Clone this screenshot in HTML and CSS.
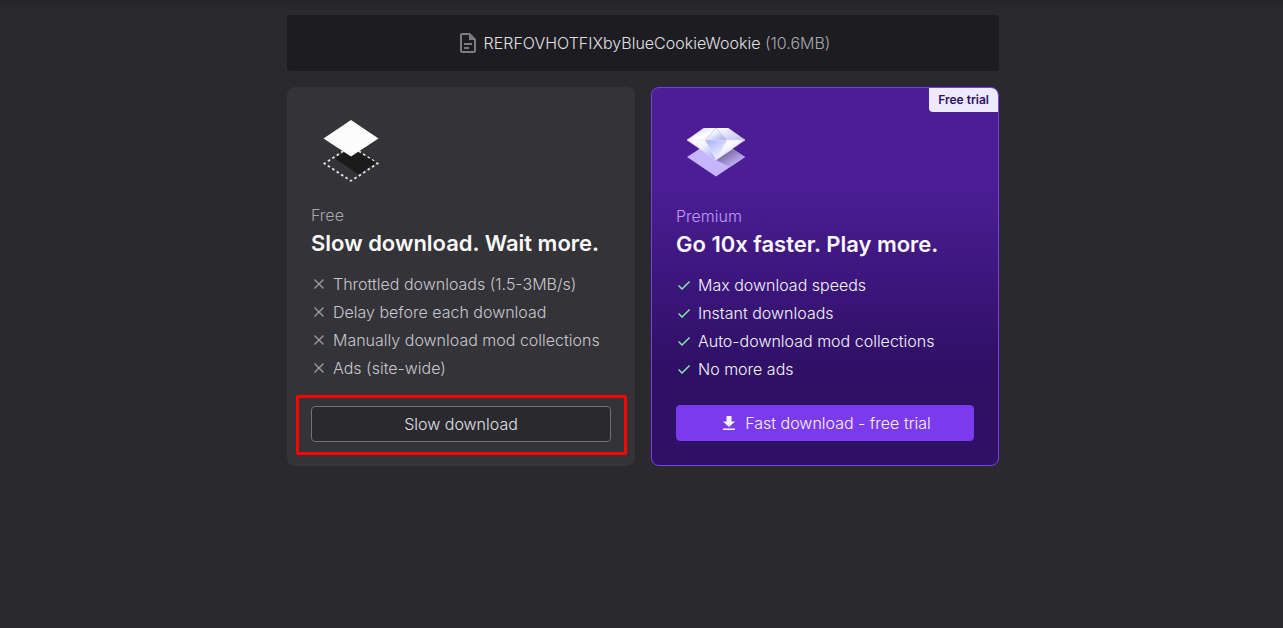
FILE: index.html
```html
<!DOCTYPE html>
<html lang="en">
<head>
<meta charset="utf-8">
<meta name="viewport" content="width=device-width, initial-scale=1">
<title>Download</title>
<link rel="stylesheet" href="styles.css">
</head>
<body>
<svg width="0" height="0" class="symbols" aria-hidden="true">
  <symbol id="cross" viewBox="0 0 16 16"><path d="M3.5 3.5l9 9M12.5 3.5l-9 9" fill="none" stroke="currentColor" stroke-width="1.2"/></symbol>
  <symbol id="check" viewBox="0 0 16 16"><path d="M2.6 8.6L6 12l7.6-7.6" fill="none" stroke="currentColor" stroke-width="1.4"/></symbol>
</svg>
<main class="page">
  <header class="file">
    <svg class="file-icon" viewBox="0 0 24 24" aria-hidden="true"><path fill="currentColor" d="M6 2a2 2 0 0 0-2 2v16a2 2 0 0 0 2 2h12a2 2 0 0 0 2-2V8l-6-6H6zm0 2h7v5h5v11H6V4zm2 8v2h8v-2H8zm0 4v2h5v-2H8z"/></svg>
    <p class="file-name">RERFOVHOTFIXbyBlueCookieWookie <span class="file-size">(10.6MB)</span></p>
  </header>
  <div class="plans">
    <section class="card">
      <svg class="art" viewBox="0 0 80 80" aria-hidden="true">
        <path d="M40 70L13.500 52.500 40 35M40 70L66.500 52.500 40 35" fill="none" stroke="#e4e4e4" stroke-width="1.800" stroke-dasharray="2.600 2.700" stroke-dashoffset="1.300"/>
        <path d="M24 47.500L40 37l25 14.500L47.500 63.500z" fill="#1b1b1c"/>
        <path d="M40 9L67.500 27.500 40 45.500 12.500 27.500z" fill="#fcfcfc"/>
      </svg>
      <p class="plan">Free</p>
      <h2 class="title">Slow download. Wait more.</h2>
      <ul class="features">
        <li><svg class="mark"><use href="#cross"/></svg>Throttled downloads (1.5-3MB/s)</li>
        <li><svg class="mark"><use href="#cross"/></svg>Delay before each download</li>
        <li><svg class="mark"><use href="#cross"/></svg>Manually download mod collections</li>
        <li><svg class="mark"><use href="#cross"/></svg>Ads (site-wide)</li>
      </ul>
      <div class="action highlighted"><button type="button" class="button">Slow download</button></div>
    </section>
    <section class="card premium">
      <span class="badge">Free trial</span>
      <svg class="art" viewBox="0 0 80 80" aria-hidden="true">
        <defs>
          <linearGradient id="facetA" x1="0" y1="0" x2="1" y2="1"><stop offset="0" stop-color="#c3cbfa"/><stop offset=".6" stop-color="#fff"/><stop offset="1" stop-color="#eceeff"/></linearGradient>
          <linearGradient id="facetR" x1="0" y1="0" x2="1" y2="1"><stop offset="0" stop-color="#fff"/><stop offset="1" stop-color="#b5bdf5"/></linearGradient>
          <linearGradient id="facetB" x1="0" y1="0" x2="1" y2="1"><stop offset="0" stop-color="#fff"/><stop offset=".4" stop-color="#f4f5ff"/><stop offset="1" stop-color="#97a5f8"/></linearGradient>
          <linearGradient id="facetC" x1="0" y1="0" x2=".7" y2="1"><stop offset="0" stop-color="#a3b0fa"/><stop offset="1" stop-color="#f5f6ff"/></linearGradient>
          <linearGradient id="shade" gradientUnits="userSpaceOnUse" x1="48" y1="40" x2="58" y2="55"><stop offset="0" stop-color="#75659b"/><stop offset="1" stop-color="#c4b5fd"/></linearGradient>
        </defs>
        <path d="M40 26L69 45 40 64.500 11 45z" fill="#c4b5fd"/>
        <path d="M40 48L57 37l12 8-15 10z" fill="url(#shade)"/>
        <path d="M28 16H40L29.500 28H11z" fill="url(#facetA)"/>
        <path d="M40 16H52L69 28H50.500z" fill="url(#facetR)"/>
        <path d="M40 16L50.500 28h-21z" fill="url(#facetB)"/>
        <path d="M11 28h18.500L40 48z" fill="url(#facetB)"/>
        <path d="M29.500 28h21L40 48z" fill="url(#facetC)"/>
        <path d="M50.500 28H69L40 48z" fill="url(#facetB)"/>
        <path d="M11 28H69M40 16L29.500 28 40 48 50.500 28zM28 16L11 28l29 20 29-20-17-12" fill="none" stroke="#f3dcdc" stroke-width=".5"/>
      </svg>
      <p class="plan">Premium</p>
      <h2 class="title">Go 10x faster. Play more.</h2>
      <ul class="features">
        <li><svg class="mark"><use href="#check"/></svg>Max download speeds</li>
        <li><svg class="mark"><use href="#check"/></svg>Instant downloads</li>
        <li><svg class="mark"><use href="#check"/></svg>Auto-download mod collections</li>
        <li><svg class="mark"><use href="#check"/></svg>No more ads</li>
      </ul>
      <div class="action"><button type="button" class="button primary"><svg class="button-icon" viewBox="0 0 20 20" aria-hidden="true"><path fill="currentColor" d="M4 15.500h12V17H4zM16 8.500h-3.500V3h-5v5.500H4l6 5.500z"/></svg>Fast download - free trial</button></div>
    </section>
  </div>
</main>
</body>
</html>
```
FILE: styles.css
```css
* { box-sizing: border-box; }

body {
  margin: 0;
  min-height: 100vh;
  background: linear-gradient(#242428, #29292e 12px);
  color: #f4f4f5;
  font: 300 16px/24px Inter, "Liberation Sans", sans-serif;
}

p, h2, ul { margin: 0; padding: 0; }

.symbols { position: absolute; }

.page {
  max-width: 715px;
  margin: 0 auto;
  padding: 15px 0 16px 3px;
}

.file {
  display: flex;
  align-items: center;
  justify-content: center;
  gap: 4px;
  min-height: 56px;
  margin-bottom: 16px;
  padding: 16px;
  border-radius: 3px;
  background: #1d1d21;
}

.file-icon { flex: none; width: 24px; height: 24px; color: #7c7b82; }
.file-name { color: #e0e0e4; }
.file-size { color: #a8a8b0; }

.plans {
  display: grid;
  grid-template-columns: repeat(auto-fit, minmax(300px, 1fr));
  gap: 16px;
}

.card {
  position: relative;
  display: flex;
  flex-direction: column;
  padding: 24px;
  border-radius: 8px;
  background: #343338;
}

.premium {
  border: 1px solid #7c3aed;
  background: linear-gradient(#4c1d95 25%, #2e1065 75%);
}

.art { width: 80px; height: 80px; margin-bottom: 12px; }

.plan { color: #a8a7ae; }
.premium .plan { color: #bd9cf8; }

.title {
  margin-bottom: 13px;
  font-size: 22px;
  line-height: 32px;
  font-weight: 600;
  color: #fafafa;
}

.features {
  display: grid;
  gap: 4px;
  margin-bottom: 24px;
  list-style: none;
  color: #c8c7cd;
}

.features li { display: flex; align-items: center; gap: 6px; }
.premium .features { color: #f5f3ff; }

.mark { flex: none; width: 16px; height: 16px; color: #a1a1aa; }
.premium .mark { color: #86efac; }

.action { position: relative; margin-top: auto; }

.highlighted::after {
  content: "";
  position: absolute;
  inset: -11px -16px -13px -15px;
  border: 3px solid #ff0000;
  border-radius: 2px;
  pointer-events: none;
}

.button {
  display: flex;
  align-items: center;
  justify-content: center;
  gap: 6px;
  width: 100%;
  min-height: 36px;
  padding: 5px 16px;
  border: 1px solid #717078;
  border-radius: 4px;
  background: #29292e;
  color: #e0e0e4;
  font: inherit;
  cursor: pointer;
}

.primary { border-color: #7c3aed; background: #7c3aed; color: #f5f3ff; }
.button-icon { flex: none; width: 20px; height: 20px; }

.badge {
  position: absolute;
  top: 0;
  right: 0;
  padding: 0 9px;
  border-radius: 0 7px 0 4px;
  background: #ede9fe;
  color: #2e1065;
  font-size: 12px;
  line-height: 24px;
  font-weight: 600;
}
```
